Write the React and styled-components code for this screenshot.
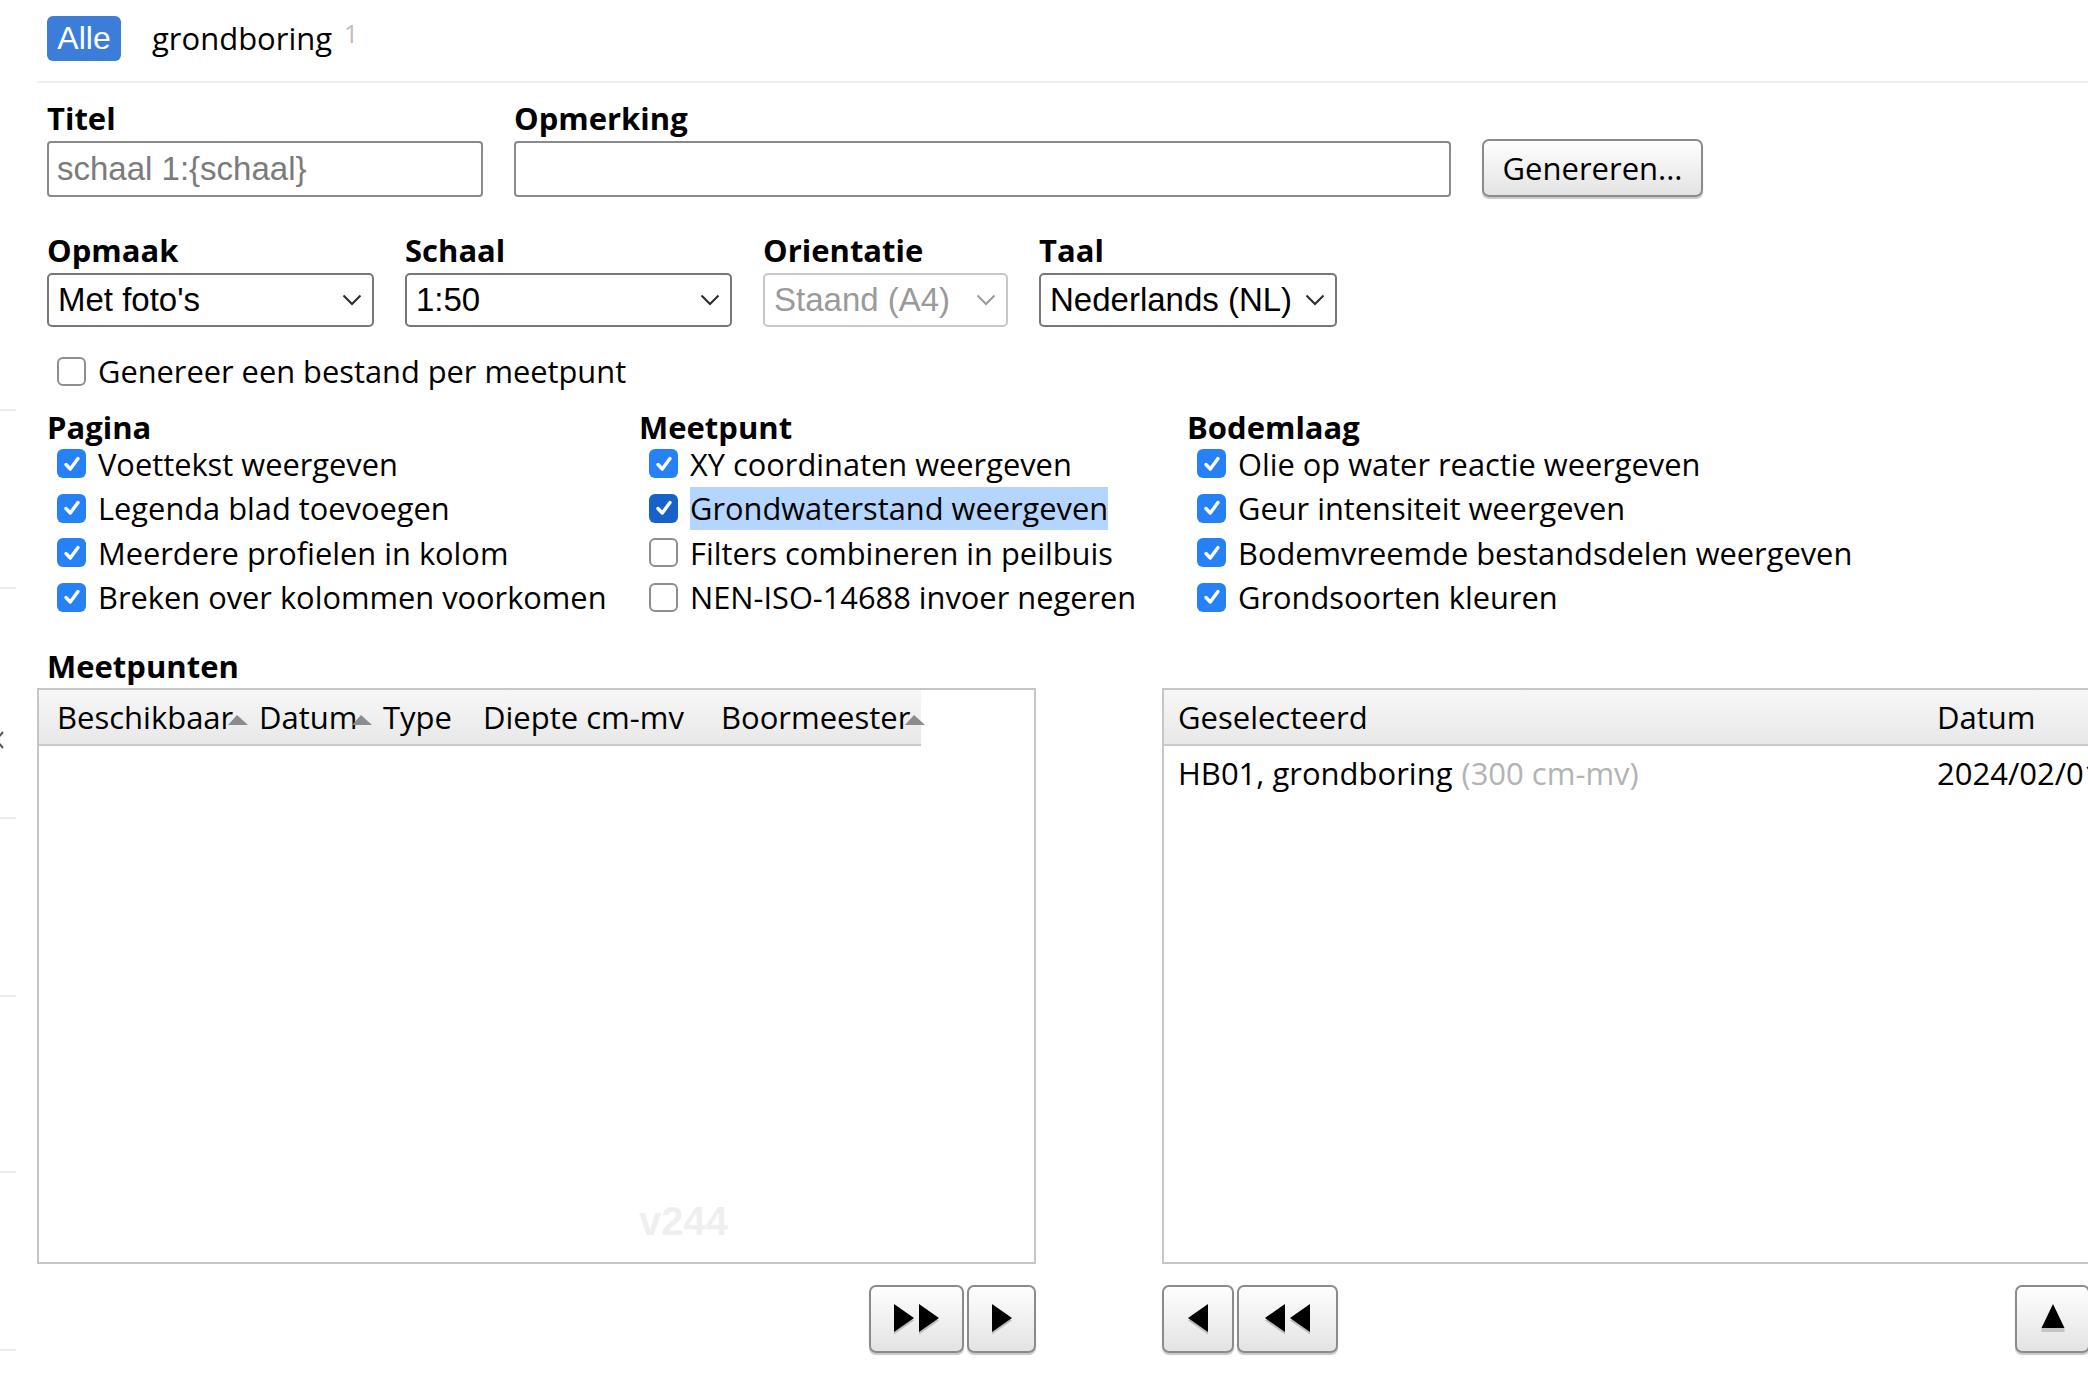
import styled, { createGlobalStyle } from "styled-components";

const GlobalStyle = createGlobalStyle`
  html, body {
    margin: 0;
    padding: 0;
    background: #ffffff;
  }
  body {
    font-family: "Open Sans", "DejaVu Sans", sans-serif;
    color: #000000;
  }
  * {
    box-sizing: border-box;
  }
`;

const Page = styled.div`
  display: flex;
  width: 2088px;
  height: 1396px;
  overflow: hidden;
  background: #ffffff;
`;

// restjes van de lijst links die net buiten beeld valt
const Sidebar = styled.div`
  flex: none;
  width: 37px;
  padding-top: 409px;
  display: flex;
  flex-direction: column;
  overflow: hidden;
`;

const SideRow = styled.div`
  flex: none;
  width: 16px;
  height: ${(p) => p.$h}px;
  border-top: 2px solid #ececec;
  padding-top: ${(p) => p.$pad || 0}px;
`;

const SideChevron = styled.svg`
  display: block;
  margin-left: -7px;
`;

const Main = styled.div`
  flex: none;
  width: 2053px;
  display: flex;
  flex-direction: column;
`;

const TabBar = styled.div`
  display: flex;
  align-items: flex-start;
  gap: 31px;
  height: 83px;
  padding: 16px 10px 0;
  border-bottom: 2px solid #eeeeee;
`;

const Badge = styled.span`
  display: inline-flex;
  align-items: center;
  justify-content: center;
  width: 74px;
  height: 45px;
  border-radius: 6px;
  background: #3b7dd8;
  color: #ffffff;
  font-family: "Liberation Sans", Arial, sans-serif;
  font-size: 32px;
`;

const Tab = styled.span`
  display: flex;
  align-items: flex-start;
  gap: 12px;
  font-size: 31px;
  line-height: 45px;
`;

const Count = styled.span`
  margin-top: 5px;
  font-size: 25px;
  line-height: 25px;
  color: #bdbdbd;
`;

const Form = styled.div`
  display: flex;
  flex-direction: column;
  padding: 17px 10px 0;
`;

const Row = styled.div`
  display: flex;
  align-items: flex-end;
  gap: 31px;
  margin-top: ${(p) => p.$mt || 0}px;
`;

const Field = styled.div`
  display: flex;
  flex-direction: column;
  gap: 5px;
`;

const Label = styled.div`
  height: 36px;
  font-size: 31px;
  line-height: 36px;
  font-weight: 700;
  white-space: nowrap;
`;

const TextInput = styled.input`
  width: ${(p) => p.$w}px;
  height: 56px;
  margin: 0;
  padding: 0 8px;
  border: 2px solid #8a8a8a;
  border-radius: 4px;
  background: #ffffff;
  font-family: "Liberation Sans", Arial, sans-serif;
  font-size: 33px;
  color: #000000;
  outline: none;
  &::placeholder {
    color: #7b7b7b;
  }
`;

const PushButton = styled.button`
  flex: none;
  display: inline-flex;
  align-items: center;
  justify-content: center;
  gap: 3px;
  width: ${(p) => p.$w}px;
  height: ${(p) => p.$h || 58}px;
  margin: 0;
  padding: 0;
  border: 2px solid #8b8b8b;
  border-radius: 7px;
  background: linear-gradient(#fefefe, #e3e3e3);
  box-shadow: 0 2px 1px rgba(0, 0, 0, 0.22);
  font-family: "Open Sans", "DejaVu Sans", sans-serif;
  font-size: 31px;
  color: #000000;
`;

const Select = styled.div`
  display: flex;
  align-items: center;
  justify-content: space-between;
  width: ${(p) => p.$w}px;
  height: 54px;
  padding: 0 10px 0 9px;
  border: 2px solid ${(p) => (p.$disabled ? "#c8c8c8" : "#777777")};
  border-radius: 5px;
  background: #ffffff;
  font-family: "Liberation Sans", Arial, sans-serif;
  font-size: 33px;
  color: ${(p) => (p.$disabled ? "#9a9a9a" : "#000000")};
  white-space: nowrap;
`;

const CheckLine = styled.div`
  display: flex;
  align-items: center;
  gap: 12px;
  height: 36px;
  padding-left: 10px;
  font-size: 30.8px;
  line-height: 36px;
  white-space: nowrap;
  margin-top: ${(p) => p.$mt || 0}px;
`;

const Box = styled.span`
  flex: none;
  display: inline-flex;
  align-items: center;
  justify-content: center;
  width: 29px;
  height: 29px;
  border-radius: 6px;
  background: ${(p) =>
    p.$checked ? (p.$focus ? "#1762c8" : "#2680f6") : "#ffffff"};
  border: ${(p) => (p.$checked ? "none" : "2px solid #8e8e8e")};
`;

const Selected = styled.span`
  display: inline-block;
  height: 43px;
  line-height: 43px;
  background: #b4d5fd;
`;

const Options = styled.div`
  display: grid;
  grid-template-columns: 592px 548px auto;
  margin-top: 20px;
`;

const OptionColumn = styled.div`
  display: flex;
  flex-direction: column;
  gap: 8.6px;
`;

const GroupTitle = styled(Label)`
  height: 28px;
  line-height: 28px;
  margin: 4px 0 -4px;
`;

const SectionTitle = styled(Label)`
  margin-top: 33px;
`;

const Panels = styled.div`
  display: grid;
  grid-template-columns: 999px minmax(0, 1fr);
  column-gap: 126px;
  row-gap: 21px;
  margin-top: 4px;
`;

const Table = styled.div`
  position: relative;
  height: 576px;
  overflow: hidden;
  border: 2px solid #c6c6c6;
  background: #ffffff;
`;

const HeaderRow = styled.div`
  display: flex;
  width: ${(p) => p.$w || "100%"};
  height: 56px;
  background: linear-gradient(#f7f7f7, #e8e8e8);
  border-bottom: 2px solid #c9c9c9;
`;

const DataRow = styled.div`
  display: flex;
  height: 54px;
`;

const Cell = styled.div`
  flex: none;
  display: flex;
  align-items: center;
  width: ${(p) => p.$w}px;
  padding-left: ${(p) => p.$pad || 18}px;
  font-size: 31px;
  white-space: nowrap;
`;

const Muted = styled.span`
  margin-left: 9px;
  color: #b3b3b3;
`;

const SortMark = styled.svg`
  flex: none;
  margin-left: -5px;
  margin-top: 3px;
`;

const Watermark = styled.div`
  position: absolute;
  left: 600px;
  top: 509px;
  font-family: "Liberation Sans", Arial, sans-serif;
  font-weight: 700;
  font-size: 40px;
  color: #efefef;
`;

const ButtonBar = styled.div`
  display: flex;
  align-items: center;
  justify-content: ${(p) => p.$justify || "flex-end"};
  gap: 3px;
`;

const ButtonGroup = styled.div`
  display: flex;
  gap: 3px;
`;

const Chevron = ({ disabled }) => (
  <svg width="20" height="12" viewBox="0 0 20 12">
    <path
      d="M1.5 1.5 L10 10 L18.5 1.5"
      fill="none"
      stroke={disabled ? "#9a9a9a" : "#2b2b2b"}
      strokeWidth="2"
    />
  </svg>
);

const Check = () => (
  <svg width="20" height="20" viewBox="0 0 20 20">
    <path
      d="M4 10.5 L8.3 15 L16 4.5"
      fill="none"
      stroke="#ffffff"
      strokeWidth="3.4"
      strokeLinecap="round"
      strokeLinejoin="round"
    />
  </svg>
);

const Option = ({ checked, focus, highlight, children, mt }) => (
  <CheckLine $mt={mt}>
    <Box $checked={checked} $focus={focus}>
      {checked && <Check />}
    </Box>
    {highlight ? <Selected>{children}</Selected> : <span>{children}</span>}
  </CheckLine>
);

const Sort = () => (
  <SortMark width="20" height="12" viewBox="0 0 20 12">
    <polygon points="0,12 9,2 20,12" fill="#8c8c8c" />
  </SortMark>
);

const Arrow = ({ dir }) => {
  const shapes = {
    right: "1,0 21,14 1,28",
    left: "21,0 1,14 21,28",
  };
  return (
    <svg width="22" height="31" viewBox="0 0 22 31">
      <polygon points={shapes[dir]} fill="#bdbdbd" transform="translate(0 2.5)" />
      <polygon points={shapes[dir]} fill="#000000" />
    </svg>
  );
};

const UpArrow = () => (
  <svg width="24" height="30" viewBox="0 0 24 30">
    <rect x="0.5" y="24" width="23" height="4" fill="#c4c4c4" />
    <polygon points="0.5,24 12,0 23.5,24" fill="#000000" />
  </svg>
);

const pagina = [
  "Voettekst weergeven",
  "Legenda blad toevoegen",
  "Meerdere profielen in kolom",
  "Breken over kolommen voorkomen",
];

const bodemlaag = [
  "Olie op water reactie weergeven",
  "Geur intensiteit weergeven",
  "Bodemvreemde bestandsdelen weergeven",
  "Grondsoorten kleuren",
];

const columns = [
  { name: "Beschikbaar", w: 202, sort: true },
  { name: "Datum", w: 124, sort: true },
  { name: "Type", w: 100 },
  { name: "Diepte cm-mv", w: 238 },
  { name: "Boormeester", w: 218, sort: true },
];

export default function App() {
  return (
    <Page>
      <GlobalStyle />
      <Sidebar>
        <SideRow $h={178} />
        <SideRow $h={230} $pad={141}>
          <SideChevron width="12" height="20" viewBox="0 0 12 20">
            <path d="M10 2 L3 10 L10 18" fill="none" stroke="#555" strokeWidth="2" />
          </SideChevron>
        </SideRow>
        <SideRow $h={178} />
        <SideRow $h={176} />
        <SideRow $h={178} />
        <SideRow $h={60} />
      </Sidebar>

      <Main>
        <TabBar>
          <Badge>Alle</Badge>
          <Tab>
            grondboring
            <Count>1</Count>
          </Tab>
        </TabBar>

        <Form>
          <Row>
            <Field>
              <Label>Titel</Label>
              <TextInput $w={436} placeholder="schaal 1:{schaal}" readOnly />
            </Field>
            <Field>
              <Label>Opmerking</Label>
              <TextInput $w={937} readOnly />
            </Field>
            <PushButton $w={221}>Genereren...</PushButton>
          </Row>

          <Row $mt={35}>
            <Field>
              <Label>Opmaak</Label>
              <Select $w={327}>
                Met foto's
                <Chevron />
              </Select>
            </Field>
            <Field>
              <Label>Schaal</Label>
              <Select $w={327}>
                1:50
                <Chevron />
              </Select>
            </Field>
            <Field>
              <Label>Orientatie</Label>
              <Select $w={245} $disabled>
                Staand (A4)
                <Chevron disabled />
              </Select>
            </Field>
            <Field>
              <Label>Taal</Label>
              <Select $w={298}>
                Nederlands (NL)
                <Chevron />
              </Select>
            </Field>
          </Row>

          <Option mt={26}>Genereer een bestand per meetpunt</Option>

          <Options>
            <OptionColumn>
              <GroupTitle>Pagina</GroupTitle>
              {pagina.map((t) => (
                <Option key={t} checked>
                  {t}
                </Option>
              ))}
            </OptionColumn>
            <OptionColumn>
              <GroupTitle>Meetpunt</GroupTitle>
              <Option checked>XY coordinaten weergeven</Option>
              <Option checked focus highlight>
                Grondwaterstand weergeven
              </Option>
              <Option>Filters combineren in peilbuis</Option>
              <Option>NEN-ISO-14688 invoer negeren</Option>
            </OptionColumn>
            <OptionColumn>
              <GroupTitle>Bodemlaag</GroupTitle>
              {bodemlaag.map((t) => (
                <Option key={t} checked>
                  {t}
                </Option>
              ))}
            </OptionColumn>
          </Options>

          <SectionTitle>Meetpunten</SectionTitle>
        </Form>

        <Panels>
          <Table>
            <HeaderRow $w="882px">
              {columns.map((c) => (
                <Cell key={c.name} $w={c.w}>
                  {c.name}
                  {c.sort && <Sort />}
                </Cell>
              ))}
            </HeaderRow>
            <Watermark>v244</Watermark>
          </Table>

          <Table>
            <HeaderRow>
              <Cell $w={757} $pad={14}>
                Geselecteerd
              </Cell>
              <Cell $w={200} $pad={16}>
                Datum
              </Cell>
            </HeaderRow>
            <DataRow>
              <Cell $w={757} $pad={14}>
                HB01, grondboring
                <Muted>(300 cm-mv)</Muted>
              </Cell>
              <Cell $w={200} $pad={16}>
                2024/02/01
              </Cell>
            </DataRow>
          </Table>

          <ButtonBar>
            <PushButton $w={95} $h={68}>
              <Arrow dir="right" />
              <Arrow dir="right" />
            </PushButton>
            <PushButton $w={69} $h={68}>
              <Arrow dir="right" />
            </PushButton>
          </ButtonBar>

          <ButtonBar $justify="space-between">
            <ButtonGroup>
              <PushButton $w={72} $h={68}>
                <Arrow dir="left" />
              </PushButton>
              <PushButton $w={101} $h={68}>
                <Arrow dir="left" />
                <Arrow dir="left" />
              </PushButton>
            </ButtonGroup>
            <PushButton $w={75} $h={68}>
              <UpArrow />
            </PushButton>
          </ButtonBar>
        </Panels>
      </Main>
    </Page>
  );
}
